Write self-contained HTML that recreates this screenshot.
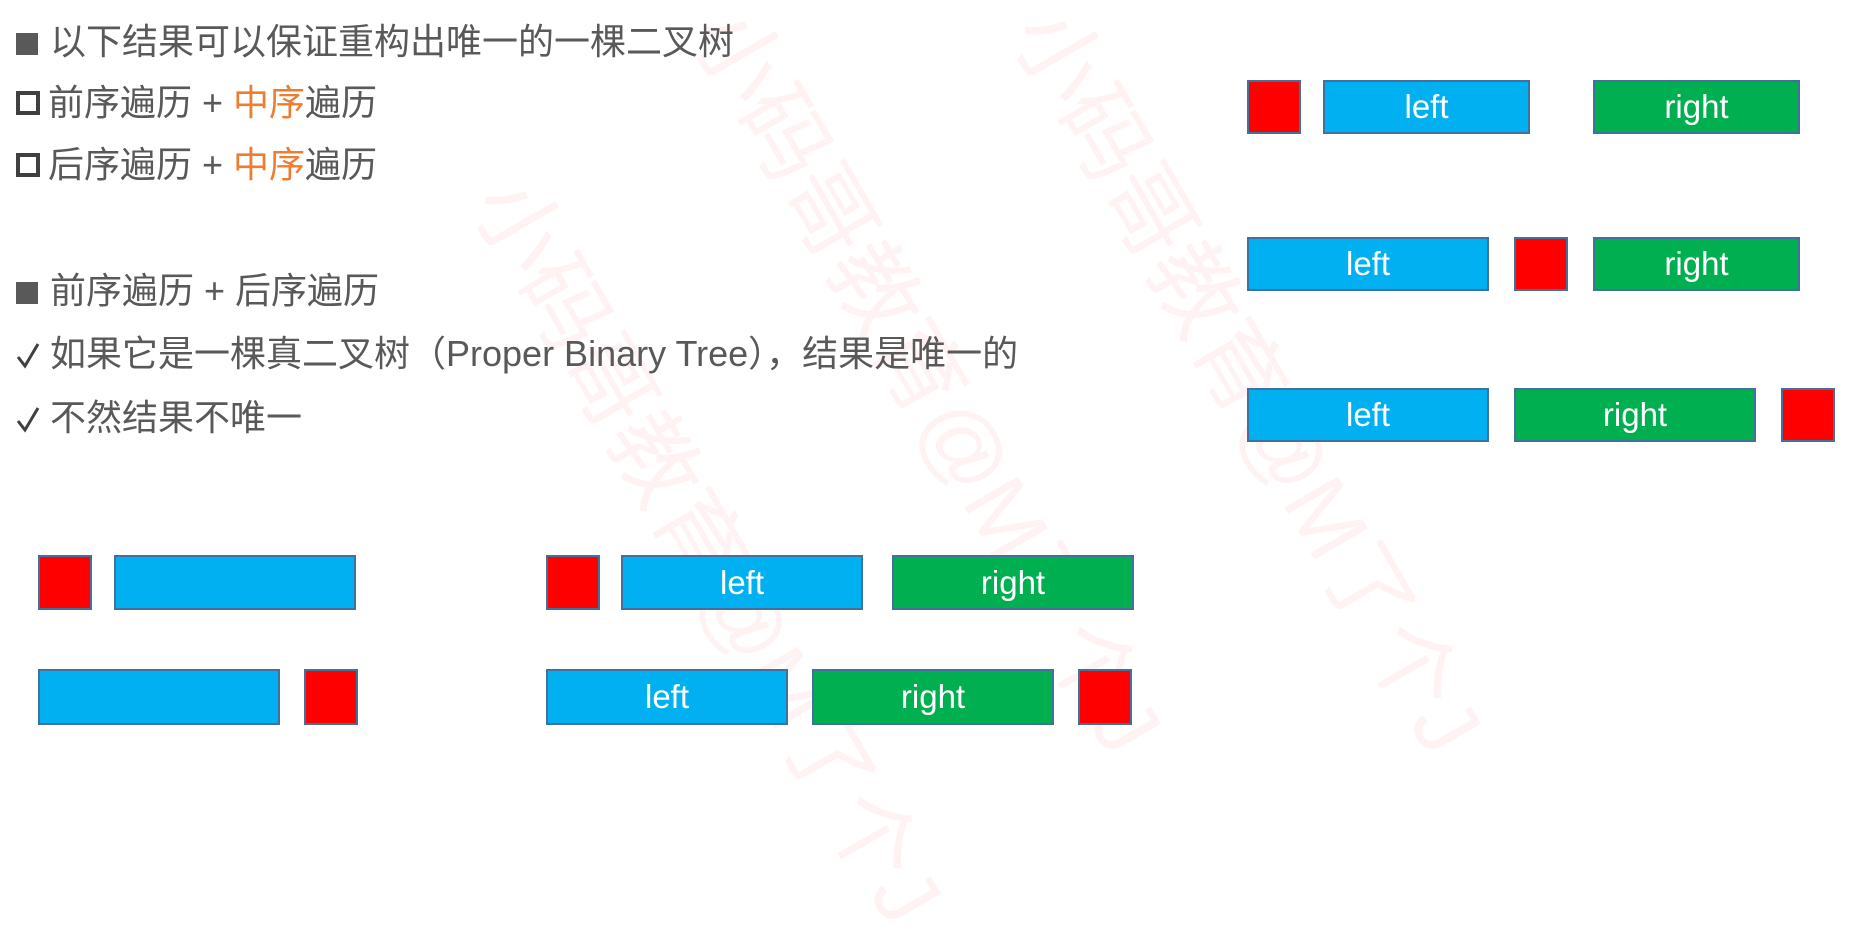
<!DOCTYPE html>
<html><head><meta charset="utf-8"><style>
body{margin:0;width:1864px;height:763px;background:#fff;position:relative;overflow:hidden;font-family:"Liberation Sans","Noto Sans CJK SC",sans-serif;}
.t{position:absolute;left:16px;font-size:36px;color:#595959;line-height:44px;white-space:nowrap;}
.o{color:#ED7D31}
.b{position:absolute;box-sizing:border-box;border:2px solid #41719C;color:#fff;font-size:33px;text-align:center;font-family:"Liberation Sans","Noto Sans CJK SC",sans-serif;}
.r{background:#FF0000}.bl{background:#00B0F0}.g{background:#00B050}
.sq{display:inline-block;width:22px;height:22px;background:#595959;margin-right:12px;vertical-align:-1px}
.hs{display:inline-block;width:16px;height:16px;border:4px solid #404040;margin-right:8px;vertical-align:0px}
.ck{display:inline-block;width:24px;height:28px;margin-right:10px;vertical-align:-3px}
.wm{position:absolute;color:rgba(255,0,0,0.05);font-size:90px;transform:rotate(60deg);white-space:nowrap;transform-origin:left top;}
</style></head><body>
<div class="wm" style="left:1100px;top:-20px">小码哥教育@M了个J</div>
<div class="wm" style="left:780px;top:-20px">小码哥教育@M了个J</div>
<div class="wm" style="left:560px;top:150px">小码哥教育@M了个J</div>
<div class="t" style="top:20px"><span class="sq"></span>以下结果可以保证重构出唯一的一棵二叉树</div>
<div class="t" style="top:81px"><span class="hs"></span>前序遍历 + <span class="o">中序</span>遍历</div>
<div class="t" style="top:143px"><span class="hs"></span>后序遍历 + <span class="o">中序</span>遍历</div>
<div class="t" style="top:269px"><span class="sq"></span>前序遍历 + 后序遍历</div>
<div class="t" style="top:332px"><svg class="ck" viewBox="0 0 24 28"><path d="M2 16 L9 25 L22 3" fill="none" stroke="#404040" stroke-width="3"/></svg>如果它是一棵真二叉树（Proper Binary Tree），结果是唯一的</div>
<div class="t" style="top:396px"><svg class="ck" viewBox="0 0 24 28"><path d="M2 16 L9 25 L22 3" fill="none" stroke="#404040" stroke-width="3"/></svg>不然结果不唯一</div>

<div class="b r" style="left:1247px;top:80px;width:54px;height:54px"></div>
<div class="b bl" style="left:1323px;top:80px;width:207px;height:54px;line-height:50px">left</div>
<div class="b g" style="left:1593px;top:80px;width:207px;height:54px;line-height:50px">right</div>

<div class="b bl" style="left:1247px;top:237px;width:242px;height:54px;line-height:50px">left</div>
<div class="b r" style="left:1514px;top:237px;width:54px;height:54px"></div>
<div class="b g" style="left:1593px;top:237px;width:207px;height:54px;line-height:50px">right</div>

<div class="b bl" style="left:1247px;top:388px;width:242px;height:54px;line-height:50px">left</div>
<div class="b g" style="left:1514px;top:388px;width:242px;height:54px;line-height:50px">right</div>
<div class="b r" style="left:1781px;top:388px;width:54px;height:54px"></div>

<div class="b r" style="left:38px;top:555px;width:54px;height:55px"></div>
<div class="b bl" style="left:114px;top:555px;width:242px;height:55px"></div>
<div class="b r" style="left:546px;top:555px;width:54px;height:55px"></div>
<div class="b bl" style="left:621px;top:555px;width:242px;height:55px;line-height:51px">left</div>
<div class="b g" style="left:892px;top:555px;width:242px;height:55px;line-height:51px">right</div>

<div class="b bl" style="left:38px;top:669px;width:242px;height:56px"></div>
<div class="b r" style="left:304px;top:669px;width:54px;height:56px"></div>
<div class="b bl" style="left:546px;top:669px;width:242px;height:56px;line-height:52px">left</div>
<div class="b g" style="left:812px;top:669px;width:242px;height:56px;line-height:52px">right</div>
<div class="b r" style="left:1078px;top:669px;width:54px;height:56px"></div>
</body></html>
